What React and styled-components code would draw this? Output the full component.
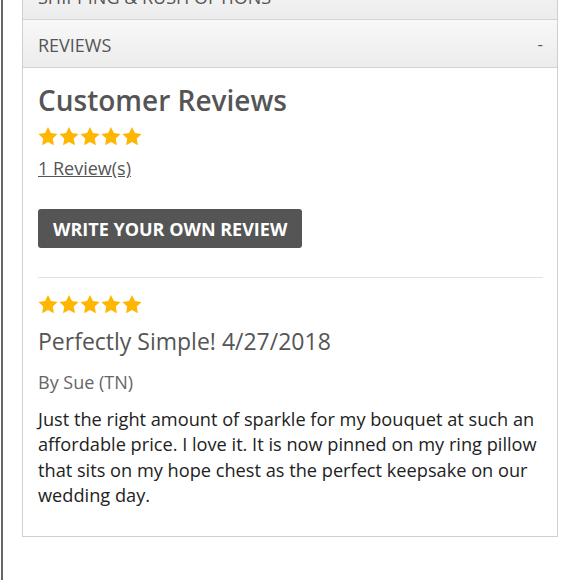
import React from "react"
import styled, { createGlobalStyle } from "styled-components"

const Global = createGlobalStyle`
  html, body { margin: 0; padding: 0; background: #fff; }
  body { font-family: "Open Sans", "Liberation Sans", sans-serif; }
`

const Star = () => (
  <svg width="20" height="20" viewBox="0 0 24 23">
    <path d="M12 0.6l3.5 7.3 8 1.1-5.8 5.6 1.4 8-7.1-3.8-7.1 3.8 1.4-8L0.5 9l8-1.1z" fill="#ffb600" />
  </svg>
)

const Stars = ({ count = 5 }) => (
  <StarRow>
    {Array.from({ length: count }).map((_, i) => <Star key={i} />)}
  </StarRow>
)

const App = () => {
  return (
    <Page>
      <Global />
      <Panel>
        <Tab>
          <TabTitle>Shipping &amp; Rush Options</TabTitle>
          <Toggle>+</Toggle>
        </Tab>
        <Tab>
          <TabTitle>Reviews</TabTitle>
          <Toggle>-</Toggle>
        </Tab>
        <Body>
          <Heading>Customer Reviews</Heading>
          <Stars />
          <CountLink>1 Review(s)</CountLink>
          <Btn>Write Your Own Review</Btn>
          <Divider />
          <Stars />
          <ReviewTitle>Perfectly Simple! 4/27/2018</ReviewTitle>
          <Author>By Sue (TN)</Author>
          <ReviewText>
            Just the right amount of sparkle for my bouquet at such an affordable price. I love it. It is now pinned on my ring pillow that sits on my hope chest as the perfect keepsake on our wedding day.
          </ReviewText>
        </Body>
      </Panel>
    </Page>
  )
}
export default App

const Page = styled.div`
  width: 580px;
  height: 580px;
  overflow: hidden;
  box-sizing: border-box;
  margin-left: 1px;
  border-left: 2px solid #666;
  padding-left: 19px;
`
const Panel = styled.div`
  width: 536px;
  box-sizing: border-box;
  border: 1.5px solid #cfcfcf;
  border-top: none;
  margin-top: -28px;
  background: #fff;
`
const Tab = styled.div`
  height: 47px;
  display: flex;
  align-items: center;
  justify-content: space-between;
  padding: 0 14px 0 15px;
  background: linear-gradient(#f8f8f8, #ececec);
  border-bottom: 1.5px solid #d4d4d4;
`
const TabTitle = styled.div`
  font-size: 18px;
  color: #555;
  text-transform: uppercase;
  padding-top: 2px;
`
const Toggle = styled.div`
  font-size: 17px;
  color: #555;
`
const Body = styled.div`
  padding: 14px 14px 12px 15px;
`
const Heading = styled.h2`
  margin: 0;
  font-size: 28px;
  font-weight: 600;
  color: #555;
  line-height: 36px;
`
const StarRow = styled.div`
  display: flex;
  gap: 1px;
  height: 22px;
  align-items: center;
  margin-top: 7px;
`
const CountLink = styled.a`
  display: inline-block;
  margin-top: 9px;
  font-size: 18px;
  color: #555;
  text-decoration: underline;
  line-height: 24px;
`
const Btn = styled.button`
  display: block;
  margin-top: 29px;
  height: 39px;
  padding: 0 15px;
  border: none;
  border-radius: 3px;
  background: #555;
  color: #fff;
  font-family: "Open Sans", "Liberation Sans", sans-serif;
  font-size: 18px;
  font-weight: 700;
  text-transform: uppercase;
`
const Divider = styled.div`
  height: 1px;
  background: #e2e2e2;
  margin: 29px 0 15px;
`
const ReviewTitle = styled.h3`
  margin: 10px 0 0;
  font-size: 23px;
  font-weight: 500;
  color: #555;
  line-height: 32px;
`
const Author = styled.div`
  margin-top: 13px;
  font-size: 18px;
  color: #666;
  line-height: 24px;
`
const ReviewText = styled.p`
  margin: 13px 0 0;
  font-size: 18.2px;
  line-height: 25.3px;
  color: #222;
  padding-bottom: 16px;
`
